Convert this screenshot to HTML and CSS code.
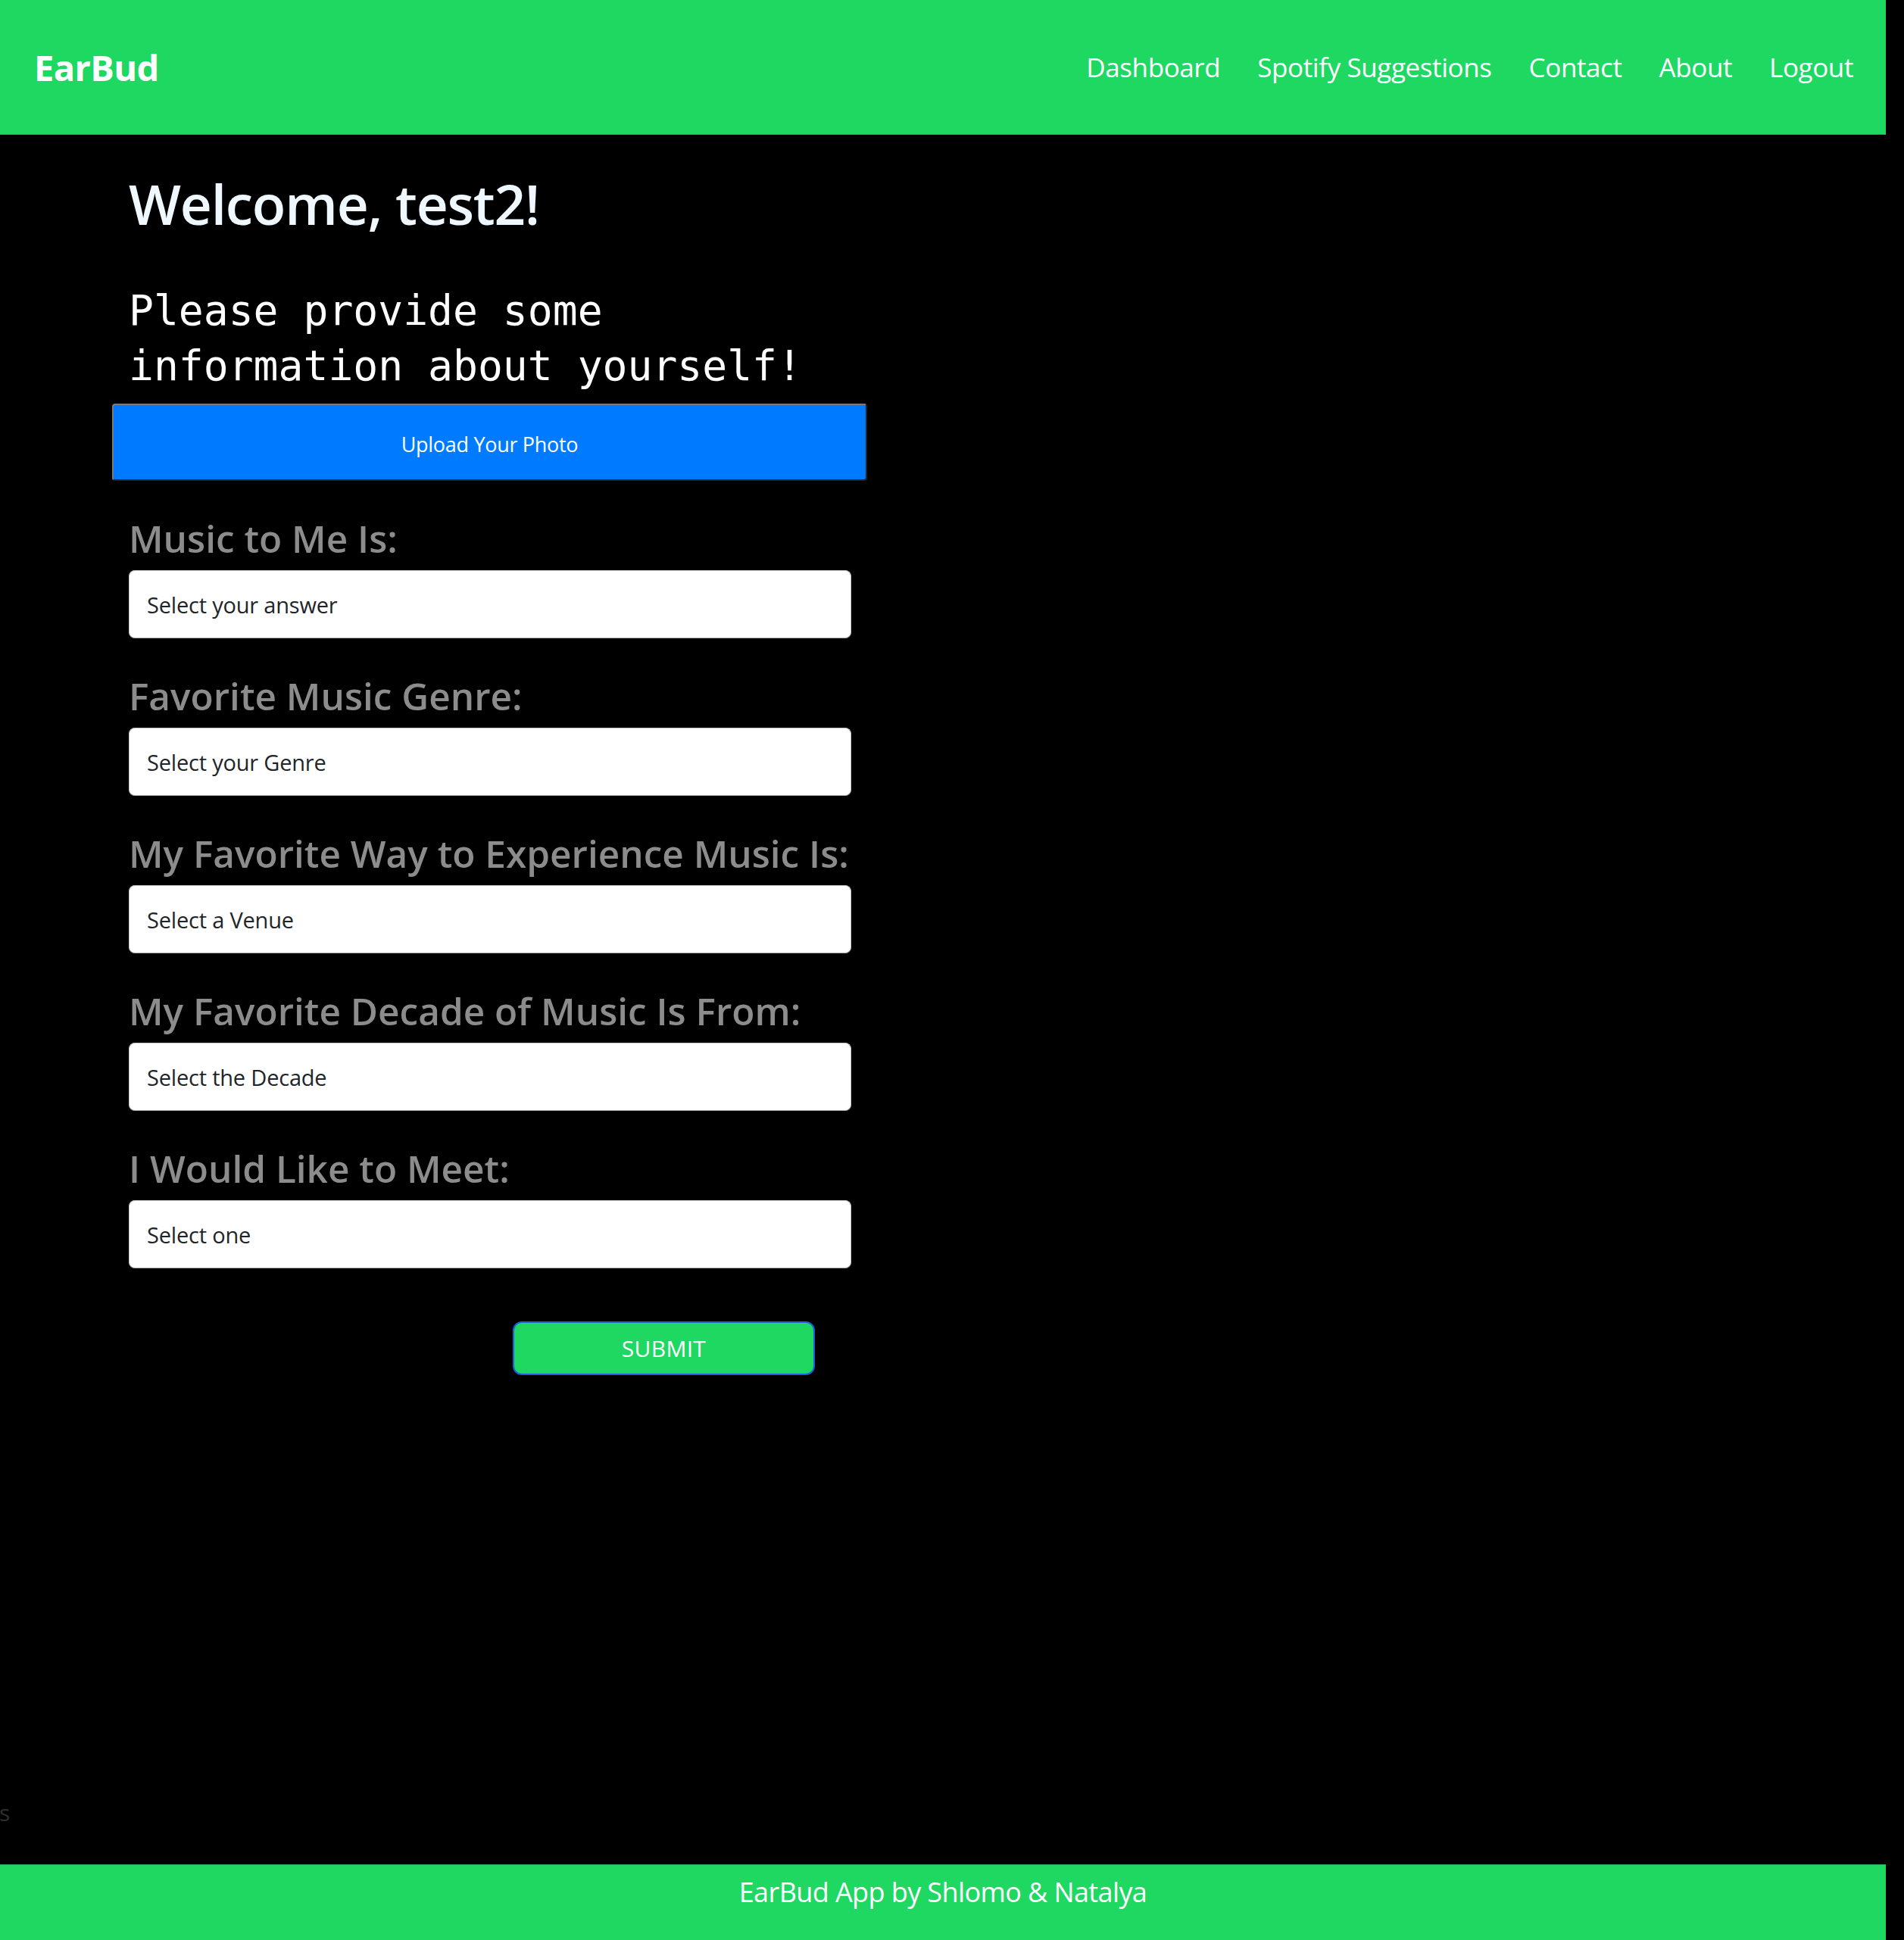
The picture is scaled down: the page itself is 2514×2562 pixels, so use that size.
FILE: index.html
```html
<!DOCTYPE html>
<html lang="en">
<head>
<meta charset="utf-8">
<title>EarBud</title>
<link rel="stylesheet" href="styles.css">
</head>
<body>
<div class="page">
  <header class="topbar">
    <a class="brand" href="#">EarBud</a>
    <nav class="nav">
      <a href="#">Dashboard</a>
      <a href="#">Spotify Suggestions</a>
      <a href="#">Contact</a>
      <a href="#">About</a>
      <a href="#">Logout</a>
    </nav>
  </header>

  <main class="main">
    <div class="panel">
      <h1 class="welcome">Welcome, test2!</h1>
      <h2 class="intro">Please provide some information about yourself!</h2>
      <button class="upload" type="button">Upload Your Photo</button>
      <form class="survey">
        <div class="field">
          <label class="field-label">Music to Me Is:</label>
          <select class="field-select"><option>Select your answer</option></select>
        </div>
        <div class="field">
          <label class="field-label">Favorite Music Genre:</label>
          <select class="field-select"><option>Select your Genre</option></select>
        </div>
        <div class="field">
          <label class="field-label">My Favorite Way to Experience Music Is:</label>
          <select class="field-select"><option>Select a Venue</option></select>
        </div>
        <div class="field">
          <label class="field-label">My Favorite Decade of Music Is From:</label>
          <select class="field-select"><option>Select the Decade</option></select>
        </div>
        <div class="field">
          <label class="field-label">I Would Like to Meet:</label>
          <select class="field-select"><option>Select one</option></select>
        </div>
        <button class="submit" type="button">SUBMIT</button>
      </form>
    </div>
  </main>

  <footer class="footer">EarBud App by Shlomo &amp; Natalya</footer>
  <span class="stray">s</span>
</div>
</body>
</html>
```

FILE: styles.css
```css
* { box-sizing: border-box; }

html, body {
  margin: 0;
  padding: 0;
  background: #000;
}

body {
  font-family: "Open Sans", "Noto Sans", sans-serif;
  color: #fff;
}

.page {
  position: relative;
  min-height: 100vh;
  display: flex;
  flex-direction: column;
}

.topbar {
  width: calc(100% - 24px);
  height: 178px;
  background: #1ed862;
  border-bottom: 1px solid #19b552;
  display: flex;
  align-items: center;
  justify-content: space-between;
  padding: 0 43px 0 45px;
}

.brand {
  color: #fff;
  text-decoration: none;
  font-weight: 700;
  font-size: 47px;
  letter-spacing: -0.6px;
}

.nav {
  display: flex;
  gap: 49px;
}

.nav a {
  color: #fff;
  text-decoration: none;
  font-size: 35px;
  letter-spacing: -0.4px;
}

.main {
  padding-left: 148px;
}

.panel {
  width: 997px;
}

.welcome {
  margin: 46px 0 0;
  padding-left: 22px;
  font-size: 73px;
  line-height: 90px;
  font-weight: 600;
  color: #f0f8ff;
  letter-spacing: -1.2px;
}

.intro {
  margin: 60px 0 0;
  padding: 0 22px;
  font-family: "DejaVu Sans Mono", "Liberation Mono", monospace;
  font-weight: 400;
  font-size: 54.7px;
  line-height: 73px;
  color: #fff;
}

.upload {
  display: block;
  width: 997px;
  height: 102px;
  margin-top: 13px;
  background: #007bff;
  color: #fff;
  border: 2px outset #7a7a7a;
  border-radius: 4px;
  font-family: "Open Sans", sans-serif;
  font-size: 27px;
  letter-spacing: -0.3px;
  padding: 5px 0 0;
}

.survey {
  padding: 0 22px;
}

.field-label {
  display: block;
  margin-top: 46px;
  font-size: 49.5px;
  line-height: 60px;
  font-weight: 600;
  color: #8c8c8c;
  letter-spacing: 0;
  white-space: nowrap;
}

.field-select {
  display: block;
  width: 954px;
  height: 90px;
  margin-top: 12px;
  appearance: none;
  -webkit-appearance: none;
  background: #fff;
  border: 1px solid #c4c8cd;
  border-bottom-color: #a9adb3;
  border-radius: 8px;
  padding: 0 23px;
  font-family: "Open Sans", sans-serif;
  font-size: 29px;
  color: #212529;
  letter-spacing: -0.2px;
}

.submit {
  display: block;
  width: 399px;
  height: 71px;
  margin: 70px 0 0 507px;
  background: #1ed862;
  color: #fff;
  border: 2px solid #1a5fe0;
  border-radius: 12px;
  font-family: "Open Sans", sans-serif;
  font-size: 30px;
  letter-spacing: 0.3px;
  padding: 0;
}

.footer {
  margin-top: auto;
  width: calc(100% - 24px);
  height: 100px;
  background: #1ed862;
  border-top: 1px solid #19a84d;
  text-align: center;
  padding-top: 11px;
  font-size: 36px;
  line-height: 50px;
  color: #fff;
  letter-spacing: -0.6px;
}

.stray {
  position: absolute;
  left: -1px;
  top: 2379px;
  font-size: 30px;
  line-height: 30px;
  color: #2e2e2e;
}
```
